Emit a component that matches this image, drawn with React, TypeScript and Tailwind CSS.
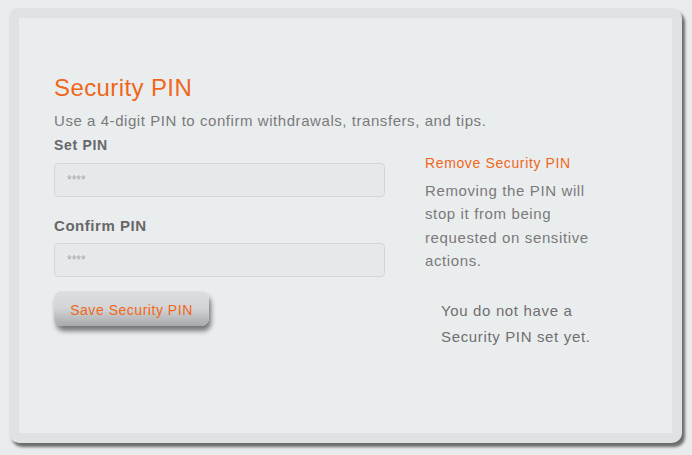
import React from 'react';

const SecurityPin = () => {
  return (
    <div
      className="min-h-[455px] w-full bg-[#e9ecec] pl-[9px] pt-[8px]"
      style={{ fontFamily: '"Liberation Sans", Arial, sans-serif' }}
    >
      <div className="h-[435px] w-[673px] rounded-[10px] bg-[#dfe2e3] p-[10px] shadow-[3px_4px_3px_rgba(0,0,0,0.55)]">
        <div className="h-full bg-[#eaedee] pl-[35px] pt-[55px]">
          <h2 className="text-[24px] leading-[30px] tracking-[0.4px] text-[#f0661a]">Security PIN</h2>
          <p className="mt-[8px] text-[15px] leading-[20px] tracking-[0.56px] text-[#7a7a7a]">
            Use a 4-digit PIN to confirm withdrawals, transfers, and tips.
          </p>

          <div className="flex">
            <div className="w-[331px]">
              <label className="mt-[6px] block text-[14px] font-bold leading-[16px] tracking-[0.7px] text-[#676767]">Set PIN</label>
              <input
                type="password"
                placeholder="****"
                className="mt-[10px] block h-[34px] w-full rounded-[4px] border border-[#d3d6d7] bg-[#e6e9ea] px-[12px] text-[12px] placeholder:text-[#a8a8a8]"
              />
              <label className="mt-[20px] block text-[15px] font-bold leading-[18px] tracking-[0.55px] text-[#676767]">Confirm PIN</label>
              <input
                type="password"
                placeholder="****"
                className="mt-[8px] block h-[34px] w-full rounded-[4px] border border-[#d3d6d7] bg-[#e6e9ea] px-[12px] text-[12px] placeholder:text-[#a8a8a8]"
              />
              <button className="mt-[14px] h-[35px] w-[155px] rounded-[8px] bg-gradient-to-b from-[#dcdedf] via-[#d2d4d5] to-[#a7a9aa] pt-[3px] text-[14px] tracking-[0.53px] text-[#f0661a] shadow-[2px_5px_5px_rgba(0,0,0,0.5)]">
                Save Security PIN
              </button>
            </div>

            <div className="ml-[40px] w-[176px] pt-[23px]">
              <div className="text-[14px] leading-[18px] tracking-[0.63px] text-[#f0661a]">Remove Security PIN</div>
              <p className="mt-[7px] text-[15px] leading-[23.3px] tracking-[0.62px] text-[#7a7a7a]">
                Removing the PIN will stop it from being requested on sensitive actions.
              </p>
              <p className="mt-[26px] pl-[16px] text-[15px] leading-[26px] tracking-[0.65px] text-[#6f6f6f]">
                You do not have a Security PIN set yet.
              </p>
            </div>
          </div>
        </div>
      </div>
    </div>
  );
};

export default SecurityPin;
